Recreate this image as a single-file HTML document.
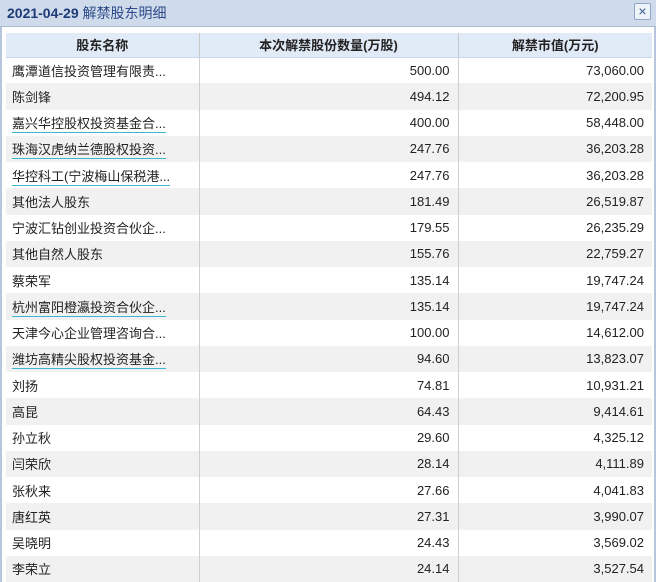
<!DOCTYPE html>
<html><head><meta charset="utf-8"><style>
*{margin:0;padding:0;box-sizing:border-box}
body{width:656px;height:582px;overflow:hidden;background:#fff;font-family:"Liberation Sans","Noto Sans CJK SC",sans-serif;font-size:13px;color:#222;position:relative}
.frame{position:absolute;left:0;top:0;width:656px;height:582px;border-left:2px solid #b7c6dc;border-right:2px solid #b7c6dc}
.title{position:absolute;left:0;top:0;width:656px;height:27px;background:#cfdbea;border-bottom:1px solid #a9bcd6;color:#1e3a78;font-size:14px;font-weight:bold;line-height:26px;padding-left:7px}
.title span{font-weight:normal;color:#2c4a8a}
.close{position:absolute;right:5px;top:3px;width:17px;height:17px;border:1px solid #8fa6c6;background:#eef3fa;border-radius:2px;color:#3a5a90;font-size:14px;line-height:14px;text-align:center}
table{position:absolute;left:6px;top:33px;width:646px;border-collapse:collapse;table-layout:fixed}
th{height:24px;background:#e0ebf7;font-weight:bold;font-size:13px;border-left:1px solid #c8c8c8;border-bottom:1px solid #c8d6e8;color:#222}
th:first-child,td:first-child{border-left:none}
td{height:26.25px;border-left:1px solid #cfcfcf;padding:0 6px;white-space:nowrap;overflow:hidden}
td.n{text-align:right;padding-right:8px}
tbody tr:nth-child(odd) td{background:#fff}
tbody tr:nth-child(even) td{background:#f1f1f1}
.u{border-bottom:1px solid #3fb6cf;padding-bottom:1px}
</style></head><body>
<div class="frame"></div>
<div class="title">2021-04-29 <span>解禁股东明细</span></div>
<div class="close">×</div>
<table>
<colgroup><col style="width:193px"><col style="width:259px"><col style="width:194px"></colgroup>
<thead><tr><th>股东名称</th><th>本次解禁股份数量(万股)</th><th>解禁市值(万元)</th></tr></thead>
<tbody>
<tr><td>鹰潭道信投资管理有限责...</td><td class="n">500.00</td><td class="n">73,060.00</td></tr>
<tr><td>陈剑锋</td><td class="n">494.12</td><td class="n">72,200.95</td></tr>
<tr><td><span class="u">嘉兴华控股权投资基金合...</span></td><td class="n">400.00</td><td class="n">58,448.00</td></tr>
<tr><td><span class="u">珠海汉虎纳兰德股权投资...</span></td><td class="n">247.76</td><td class="n">36,203.28</td></tr>
<tr><td><span class="u">华控科工(宁波梅山保税港...</span></td><td class="n">247.76</td><td class="n">36,203.28</td></tr>
<tr><td>其他法人股东</td><td class="n">181.49</td><td class="n">26,519.87</td></tr>
<tr><td>宁波汇钻创业投资合伙企...</td><td class="n">179.55</td><td class="n">26,235.29</td></tr>
<tr><td>其他自然人股东</td><td class="n">155.76</td><td class="n">22,759.27</td></tr>
<tr><td>蔡荣军</td><td class="n">135.14</td><td class="n">19,747.24</td></tr>
<tr><td><span class="u">杭州富阳橙瀛投资合伙企...</span></td><td class="n">135.14</td><td class="n">19,747.24</td></tr>
<tr><td>天津今心企业管理咨询合...</td><td class="n">100.00</td><td class="n">14,612.00</td></tr>
<tr><td><span class="u">潍坊高精尖股权投资基金...</span></td><td class="n">94.60</td><td class="n">13,823.07</td></tr>
<tr><td>刘扬</td><td class="n">74.81</td><td class="n">10,931.21</td></tr>
<tr><td>高昆</td><td class="n">64.43</td><td class="n">9,414.61</td></tr>
<tr><td>孙立秋</td><td class="n">29.60</td><td class="n">4,325.12</td></tr>
<tr><td>闫荣欣</td><td class="n">28.14</td><td class="n">4,111.89</td></tr>
<tr><td>张秋来</td><td class="n">27.66</td><td class="n">4,041.83</td></tr>
<tr><td>唐红英</td><td class="n">27.31</td><td class="n">3,990.07</td></tr>
<tr><td>吴晓明</td><td class="n">24.43</td><td class="n">3,569.02</td></tr>
<tr><td>李荣立</td><td class="n">24.14</td><td class="n">3,527.54</td></tr>
</tbody></table>
</body></html>
